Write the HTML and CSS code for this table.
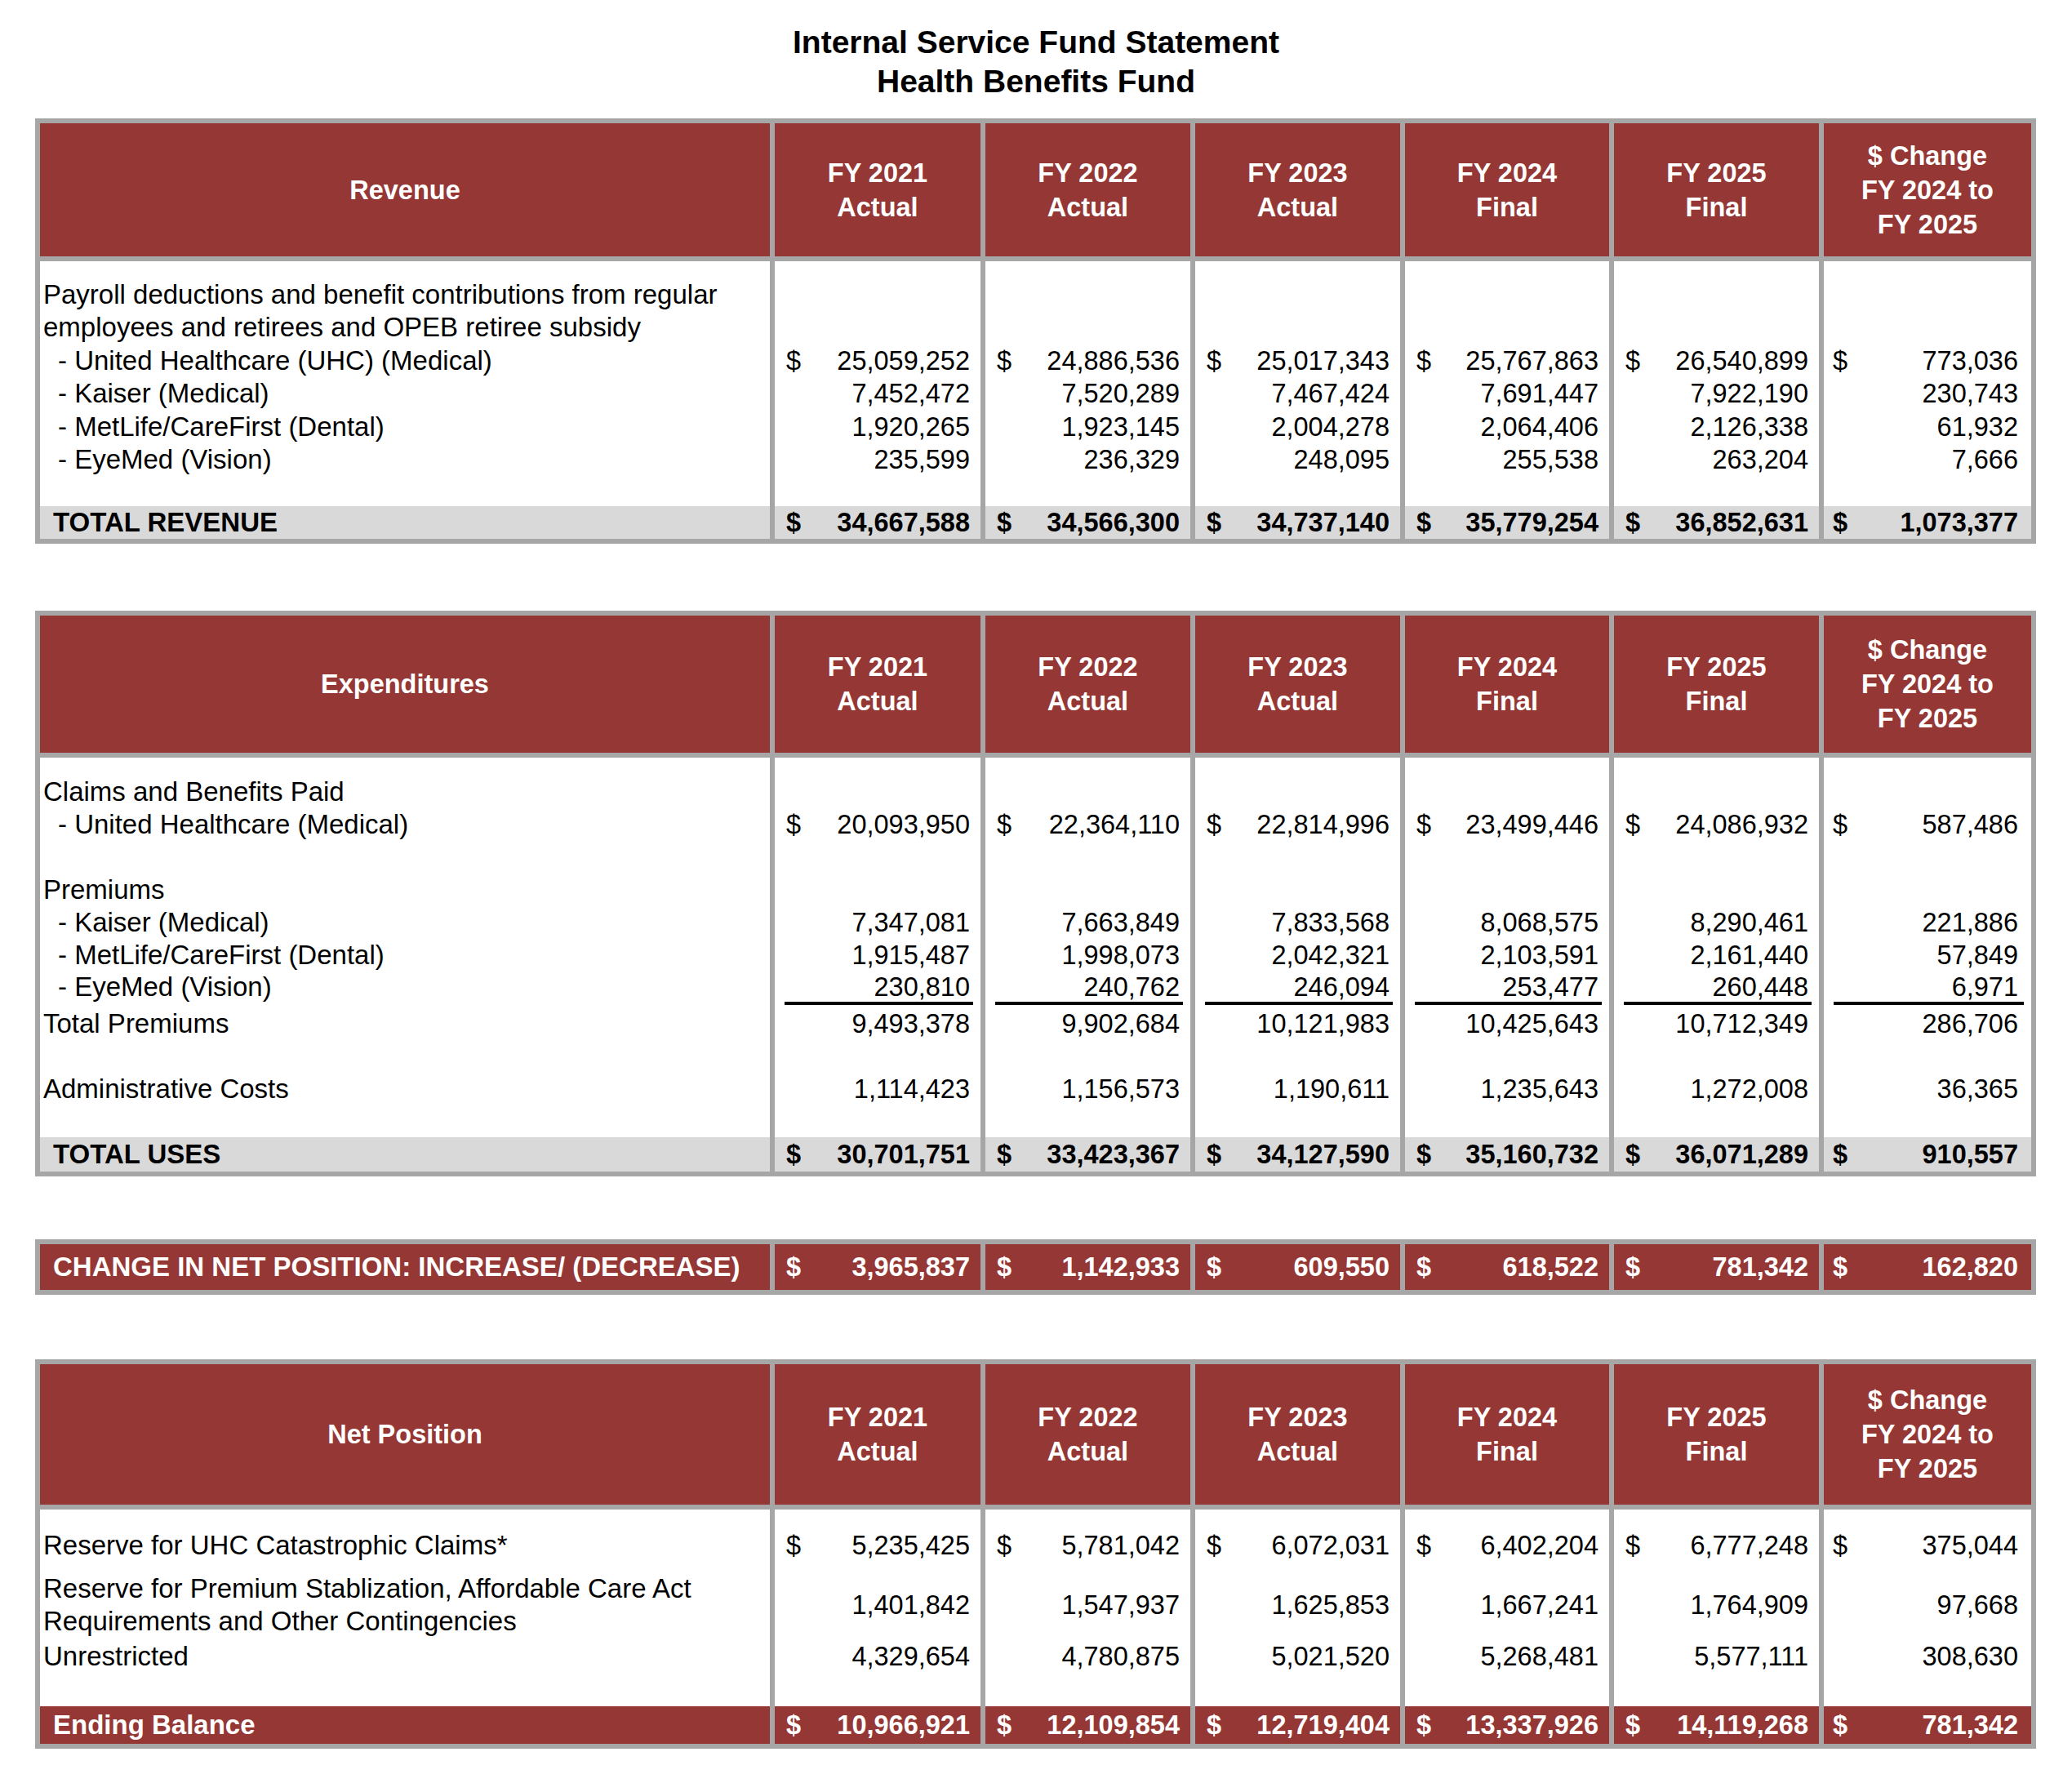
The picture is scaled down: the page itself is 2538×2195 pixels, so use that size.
FILE: index.html
```html
<!DOCTYPE html>
<html lang="en">
<head>
<meta charset="utf-8">
<title>Internal Service Fund Statement - Health Benefits Fund</title>
<link rel="stylesheet" href="styles.css">
</head>
<body>
<header class="title">
  <div>Internal Service Fund Statement</div>
  <div>Health Benefits Fund</div>
</header>

<section class="sheet rev">
  <div class="row head">
    <div class="h">Revenue</div>
    <div class="h">FY 2021<br>Actual</div>
    <div class="h">FY 2022<br>Actual</div>
    <div class="h">FY 2023<br>Actual</div>
    <div class="h">FY 2024<br>Final</div>
    <div class="h">FY 2025<br>Final</div>
    <div class="h">$ Change<br>FY 2024 to<br>FY 2025</div>
  </div>
  <div class="row first">
    <div class="lbl">Payroll deductions and benefit contributions from regular<br>employees and retirees and OPEB retiree subsidy</div>
    <div class="amt"></div><div class="amt"></div><div class="amt"></div><div class="amt"></div><div class="amt"></div><div class="amt"></div>
  </div>
  <div class="row">
    <div class="lbl sub">- United Healthcare (UHC) (Medical)</div>
    <div class="amt"><span class="cur">$</span><span>25,059,252</span></div>
    <div class="amt"><span class="cur">$</span><span>24,886,536</span></div>
    <div class="amt"><span class="cur">$</span><span>25,017,343</span></div>
    <div class="amt"><span class="cur">$</span><span>25,767,863</span></div>
    <div class="amt"><span class="cur">$</span><span>26,540,899</span></div>
    <div class="amt"><span class="cur">$</span><span>773,036</span></div>
  </div>
  <div class="row">
    <div class="lbl sub">- Kaiser (Medical)</div>
    <div class="amt"><span>7,452,472</span></div>
    <div class="amt"><span>7,520,289</span></div>
    <div class="amt"><span>7,467,424</span></div>
    <div class="amt"><span>7,691,447</span></div>
    <div class="amt"><span>7,922,190</span></div>
    <div class="amt"><span>230,743</span></div>
  </div>
  <div class="row">
    <div class="lbl sub">- MetLife/CareFirst (Dental)</div>
    <div class="amt"><span>1,920,265</span></div>
    <div class="amt"><span>1,923,145</span></div>
    <div class="amt"><span>2,004,278</span></div>
    <div class="amt"><span>2,064,406</span></div>
    <div class="amt"><span>2,126,338</span></div>
    <div class="amt"><span>61,932</span></div>
  </div>
  <div class="row last">
    <div class="lbl sub">- EyeMed (Vision)</div>
    <div class="amt"><span>235,599</span></div>
    <div class="amt"><span>236,329</span></div>
    <div class="amt"><span>248,095</span></div>
    <div class="amt"><span>255,538</span></div>
    <div class="amt"><span>263,204</span></div>
    <div class="amt"><span>7,666</span></div>
  </div>
  <div class="row total">
    <div class="lbl">TOTAL REVENUE</div>
    <div class="amt"><span class="cur">$</span><span>34,667,588</span></div>
    <div class="amt"><span class="cur">$</span><span>34,566,300</span></div>
    <div class="amt"><span class="cur">$</span><span>34,737,140</span></div>
    <div class="amt"><span class="cur">$</span><span>35,779,254</span></div>
    <div class="amt"><span class="cur">$</span><span>36,852,631</span></div>
    <div class="amt"><span class="cur">$</span><span>1,073,377</span></div>
  </div>
</section>

<section class="sheet exp">
  <div class="row head">
    <div class="h">Expenditures</div>
    <div class="h">FY 2021<br>Actual</div>
    <div class="h">FY 2022<br>Actual</div>
    <div class="h">FY 2023<br>Actual</div>
    <div class="h">FY 2024<br>Final</div>
    <div class="h">FY 2025<br>Final</div>
    <div class="h">$ Change<br>FY 2024 to<br>FY 2025</div>
  </div>
  <div class="row first">
    <div class="lbl">Claims and Benefits Paid</div>
    <div class="amt"></div><div class="amt"></div><div class="amt"></div><div class="amt"></div><div class="amt"></div><div class="amt"></div>
  </div>
  <div class="row">
    <div class="lbl sub">- United Healthcare (Medical)</div>
    <div class="amt"><span class="cur">$</span><span>20,093,950</span></div>
    <div class="amt"><span class="cur">$</span><span>22,364,110</span></div>
    <div class="amt"><span class="cur">$</span><span>22,814,996</span></div>
    <div class="amt"><span class="cur">$</span><span>23,499,446</span></div>
    <div class="amt"><span class="cur">$</span><span>24,086,932</span></div>
    <div class="amt"><span class="cur">$</span><span>587,486</span></div>
  </div>
  <div class="row gap">
    <div class="lbl">Premiums</div>
    <div class="amt"></div><div class="amt"></div><div class="amt"></div><div class="amt"></div><div class="amt"></div><div class="amt"></div>
  </div>
  <div class="row">
    <div class="lbl sub">- Kaiser (Medical)</div>
    <div class="amt"><span>7,347,081</span></div>
    <div class="amt"><span>7,663,849</span></div>
    <div class="amt"><span>7,833,568</span></div>
    <div class="amt"><span>8,068,575</span></div>
    <div class="amt"><span>8,290,461</span></div>
    <div class="amt"><span>221,886</span></div>
  </div>
  <div class="row">
    <div class="lbl sub">- MetLife/CareFirst (Dental)</div>
    <div class="amt"><span>1,915,487</span></div>
    <div class="amt"><span>1,998,073</span></div>
    <div class="amt"><span>2,042,321</span></div>
    <div class="amt"><span>2,103,591</span></div>
    <div class="amt"><span>2,161,440</span></div>
    <div class="amt"><span>57,849</span></div>
  </div>
  <div class="row under">
    <div class="lbl sub">- EyeMed (Vision)</div>
    <div class="amt"><span class="ul">230,810</span></div>
    <div class="amt"><span class="ul">240,762</span></div>
    <div class="amt"><span class="ul">246,094</span></div>
    <div class="amt"><span class="ul">253,477</span></div>
    <div class="amt"><span class="ul">260,448</span></div>
    <div class="amt"><span class="ul">6,971</span></div>
  </div>
  <div class="row">
    <div class="lbl">Total Premiums</div>
    <div class="amt"><span>9,493,378</span></div>
    <div class="amt"><span>9,902,684</span></div>
    <div class="amt"><span>10,121,983</span></div>
    <div class="amt"><span>10,425,643</span></div>
    <div class="amt"><span>10,712,349</span></div>
    <div class="amt"><span>286,706</span></div>
  </div>
  <div class="row gap last">
    <div class="lbl">Administrative Costs</div>
    <div class="amt"><span>1,114,423</span></div>
    <div class="amt"><span>1,156,573</span></div>
    <div class="amt"><span>1,190,611</span></div>
    <div class="amt"><span>1,235,643</span></div>
    <div class="amt"><span>1,272,008</span></div>
    <div class="amt"><span>36,365</span></div>
  </div>
  <div class="row total">
    <div class="lbl">TOTAL USES</div>
    <div class="amt"><span class="cur">$</span><span>30,701,751</span></div>
    <div class="amt"><span class="cur">$</span><span>33,423,367</span></div>
    <div class="amt"><span class="cur">$</span><span>34,127,590</span></div>
    <div class="amt"><span class="cur">$</span><span>35,160,732</span></div>
    <div class="amt"><span class="cur">$</span><span>36,071,289</span></div>
    <div class="amt"><span class="cur">$</span><span>910,557</span></div>
  </div>
</section>

<section class="sheet chg">
  <div class="row band">
    <div class="lbl">CHANGE IN NET POSITION: INCREASE/ (DECREASE)</div>
    <div class="amt"><span class="cur">$</span><span>3,965,837</span></div>
    <div class="amt"><span class="cur">$</span><span>1,142,933</span></div>
    <div class="amt"><span class="cur">$</span><span>609,550</span></div>
    <div class="amt"><span class="cur">$</span><span>618,522</span></div>
    <div class="amt"><span class="cur">$</span><span>781,342</span></div>
    <div class="amt"><span class="cur">$</span><span>162,820</span></div>
  </div>
</section>

<section class="sheet net">
  <div class="row head">
    <div class="h">Net Position</div>
    <div class="h">FY 2021<br>Actual</div>
    <div class="h">FY 2022<br>Actual</div>
    <div class="h">FY 2023<br>Actual</div>
    <div class="h">FY 2024<br>Final</div>
    <div class="h">FY 2025<br>Final</div>
    <div class="h">$ Change<br>FY 2024 to<br>FY 2025</div>
  </div>
  <div class="row first">
    <div class="lbl">Reserve for UHC Catastrophic Claims*</div>
    <div class="amt"><span class="cur">$</span><span>5,235,425</span></div>
    <div class="amt"><span class="cur">$</span><span>5,781,042</span></div>
    <div class="amt"><span class="cur">$</span><span>6,072,031</span></div>
    <div class="amt"><span class="cur">$</span><span>6,402,204</span></div>
    <div class="amt"><span class="cur">$</span><span>6,777,248</span></div>
    <div class="amt"><span class="cur">$</span><span>375,044</span></div>
  </div>
  <div class="row two">
    <div class="lbl">Reserve for Premium Stablization, Affordable Care Act<br>Requirements and Other Contingencies</div>
    <div class="amt"><span>1,401,842</span></div>
    <div class="amt"><span>1,547,937</span></div>
    <div class="amt"><span>1,625,853</span></div>
    <div class="amt"><span>1,667,241</span></div>
    <div class="amt"><span>1,764,909</span></div>
    <div class="amt"><span>97,668</span></div>
  </div>
  <div class="row last">
    <div class="lbl">Unrestricted</div>
    <div class="amt"><span>4,329,654</span></div>
    <div class="amt"><span>4,780,875</span></div>
    <div class="amt"><span>5,021,520</span></div>
    <div class="amt"><span>5,268,481</span></div>
    <div class="amt"><span>5,577,111</span></div>
    <div class="amt"><span>308,630</span></div>
  </div>
  <div class="row band end">
    <div class="lbl">Ending Balance</div>
    <div class="amt"><span class="cur">$</span><span>10,966,921</span></div>
    <div class="amt"><span class="cur">$</span><span>12,109,854</span></div>
    <div class="amt"><span class="cur">$</span><span>12,719,404</span></div>
    <div class="amt"><span class="cur">$</span><span>13,337,926</span></div>
    <div class="amt"><span class="cur">$</span><span>14,119,268</span></div>
    <div class="amt"><span class="cur">$</span><span>781,342</span></div>
  </div>
</section>
</body>
</html>
```

FILE: styles.css
```css
html, body {
  margin: 0;
  padding: 0;
  background: #ffffff;
}

body {
  width: 2538px;
  font-family: "Liberation Sans", Arial, sans-serif;
  font-size: 32.5px;
  color: #000000;
}

.title {
  padding-top: 28px;
  font-weight: bold;
  font-size: 39px;
  line-height: 48px;
  text-align: center;
}

.sheet {
  display: grid;
  grid-template-columns: 894px 252px 251px 251px 250px 251px 254px;
  column-gap: 6px;
  width: max-content;
  margin-left: 43px;
  padding: 6px;
  background: #a6a6a6;
  line-height: 40.4px;
}

.row {
  display: contents;
}

.rev { margin-top: 21px; }
.exp { margin-top: 82px; line-height: 40px; }
.chg { margin-top: 77px; }
.net { margin-top: 79px; }

/* header band */
.h {
  display: flex;
  align-items: center;
  justify-content: center;
  text-align: center;
  margin-bottom: 6px;
  background: #953735;
  color: #ffffff;
  font-weight: bold;
  line-height: 42px;
}

.rev .h { height: 163px; }
.exp .h { height: 168px; }
.net .h { height: 172px; }

/* body cells */
.lbl {
  background: #ffffff;
  padding-left: 4px;
  font-size: 33px;
  white-space: nowrap;
}

.lbl.sub {
  padding-left: 22px;
}

.amt {
  display: flex;
  justify-content: flex-end;
  background: #ffffff;
  padding: 0 13px 0 14px;
  white-space: nowrap;
}

.amt:last-child {
  padding: 0 16px 0 11px;
}

.cur {
  margin-right: auto;
}

.rev .first > * { padding-top: 21px; }
.rev .last > * { padding-bottom: 37px; }

.exp .first > * { padding-top: 22px; }
.exp .gap > * { padding-top: 40px; }
.exp .last > * { padding-bottom: 39px; }

.exp .under .lbl {
  line-height: 38px;
  padding-bottom: 6px;
}
.exp .under .amt {
  align-items: flex-start;
  padding: 0 9px 0 12px;
}
.ul {
  flex: 1;
  margin-top: 1px;
  line-height: 36px;
  text-align: right;
  padding-right: 4px;
  border-bottom: 4px solid #000000;
}
.exp .under .amt:last-child .ul {
  padding-right: 7px;
}

.net .first > * { padding-top: 24px; }
.net .two > * { padding-top: 12px; }
.net .two .amt {
  align-items: center;
}
.net .last > * { padding-top: 2px; padding-bottom: 41px; }

/* total rows */
.total > * {
  background: #d9d9d9;
  font-weight: bold;
  line-height: 40px;
}

.exp .total > * {
  line-height: 42px;
}

.total .lbl,
.band .lbl {
  padding-left: 16px;
}

/* red bands */
.band > * {
  background: #953735;
  color: #ffffff;
  font-weight: bold;
  line-height: 56px;
}

.band.end > * {
  line-height: 46px;
}
```
